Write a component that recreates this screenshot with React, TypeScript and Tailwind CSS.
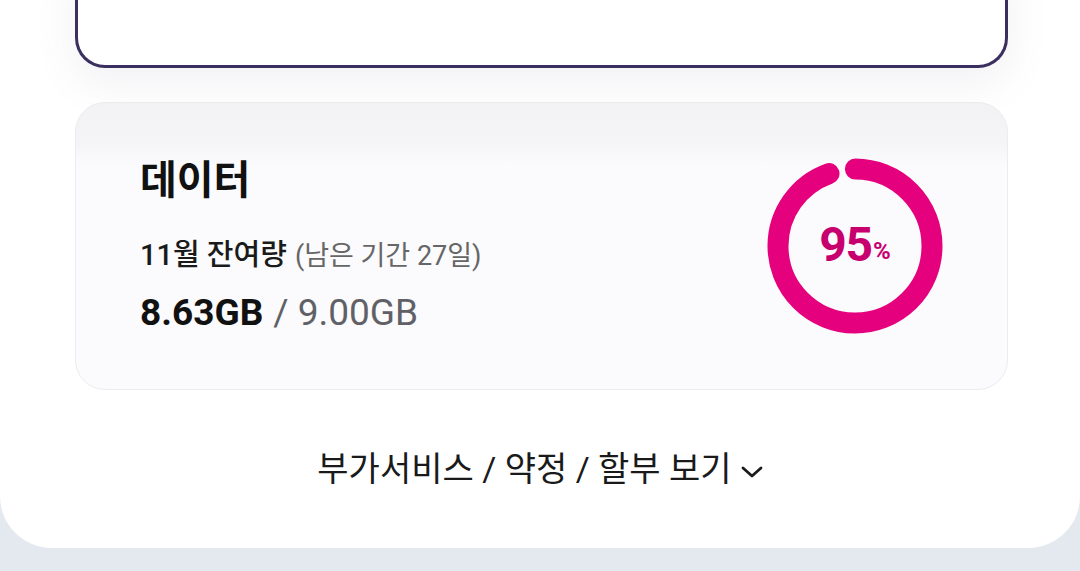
import React from "react";

const font = { fontFamily: "Roboto, 'Noto Sans CJK KR', sans-serif" };

// ring with a small round-capped gap just left of 12 o'clock
function Donut({ percent }: { percent: number }) {
  const r = 77;
  const sw = 21;
  const c = 2 * Math.PI * r;
  const capDeg = ((sw / 2) / r) * (180 / Math.PI);
  const gapDeg = (100 - percent) * 3.6 - 13 + 2 * capDeg;
  const len = (c * (360 - gapDeg)) / 360;
  const start = -100 + gapDeg / 2;
  return (
    <div className="relative h-[180px] w-[180px]">
      <svg viewBox="0 0 180 180" className="h-full w-full">
        <circle
          cx="90"
          cy="90"
          r={r}
          fill="none"
          stroke="#e5007e"
          strokeWidth={sw}
          strokeLinecap="round"
          strokeDasharray={`${len} ${c}`}
          transform={`rotate(${start} 90 90)`}
        />
      </svg>
      <div className="absolute inset-0 flex items-center justify-center pb-[2px]">
        <span className="text-[48px] font-bold tracking-tight text-[#c8006f]">95</span>
        <span className="ml-[1px] mt-[12px] text-[24px] font-bold text-[#c8006f]">%</span>
      </div>
    </div>
  );
}

export default function App() {
  return (
    <div className="h-[571px] w-[1080px] overflow-hidden bg-[#e4e8ef]" style={font}>
      <div className="rounded-b-[52px] bg-white pb-[62px]">
        {/* top card */}
        <div className="pl-[75px] pr-[72px]">
          <div className="-mt-[40px] h-[108px] rounded-b-[30px] border-[3px] border-t-0 border-[#3a2f5f] bg-white shadow-[0_14px_40px_rgba(120,110,140,0.10)]" />
        </div>

        {/* data card */}
        <div className="mt-[34px] pl-[75px] pr-[72px]">
          <div className="flex h-[288px] items-center justify-between overflow-hidden rounded-[30px] border border-[#ececef] bg-[linear-gradient(to_bottom,#f2f2f4_0px,#f5f5f7_40px,#fbfafc_62px)] pl-[64px] pr-[62px]">
            <div className="flex flex-col">
              <div className="text-[40px] font-bold leading-none text-[#111]">데이터</div>
              <div className="mt-[40px] flex items-baseline text-[29px] leading-none text-[#1a1a1a]">
                <span className="font-medium">11월 잔여량</span>
                <span className="ml-[8px] text-[27px] text-[#666]">(남은 기간 27일)</span>
              </div>
              <div className="mt-[24px] flex items-baseline text-[37px] leading-none">
                <span className="font-bold text-[#111]">8.63GB</span>
                <span className="ml-[10px] text-[#5f6166]">/ 9.00GB</span>
              </div>
            </div>
            <Donut percent={95} />
          </div>
        </div>

        {/* link */}
        <div className="mt-[62px] flex items-center justify-center text-[34px] leading-none text-[#1a1a1a]">
          <span>부가서비스 / 약정 / 할부 보기</span>
          <svg viewBox="0 0 22 12" className="ml-[9px] mt-[6px] h-[12px] w-[22px]" fill="none" stroke="#1a1a1a" strokeWidth="2.8" strokeLinecap="round" strokeLinejoin="round">
            <path d="M2 2 L11 10 L20 2" />
          </svg>
        </div>
      </div>
    </div>
  );
}
